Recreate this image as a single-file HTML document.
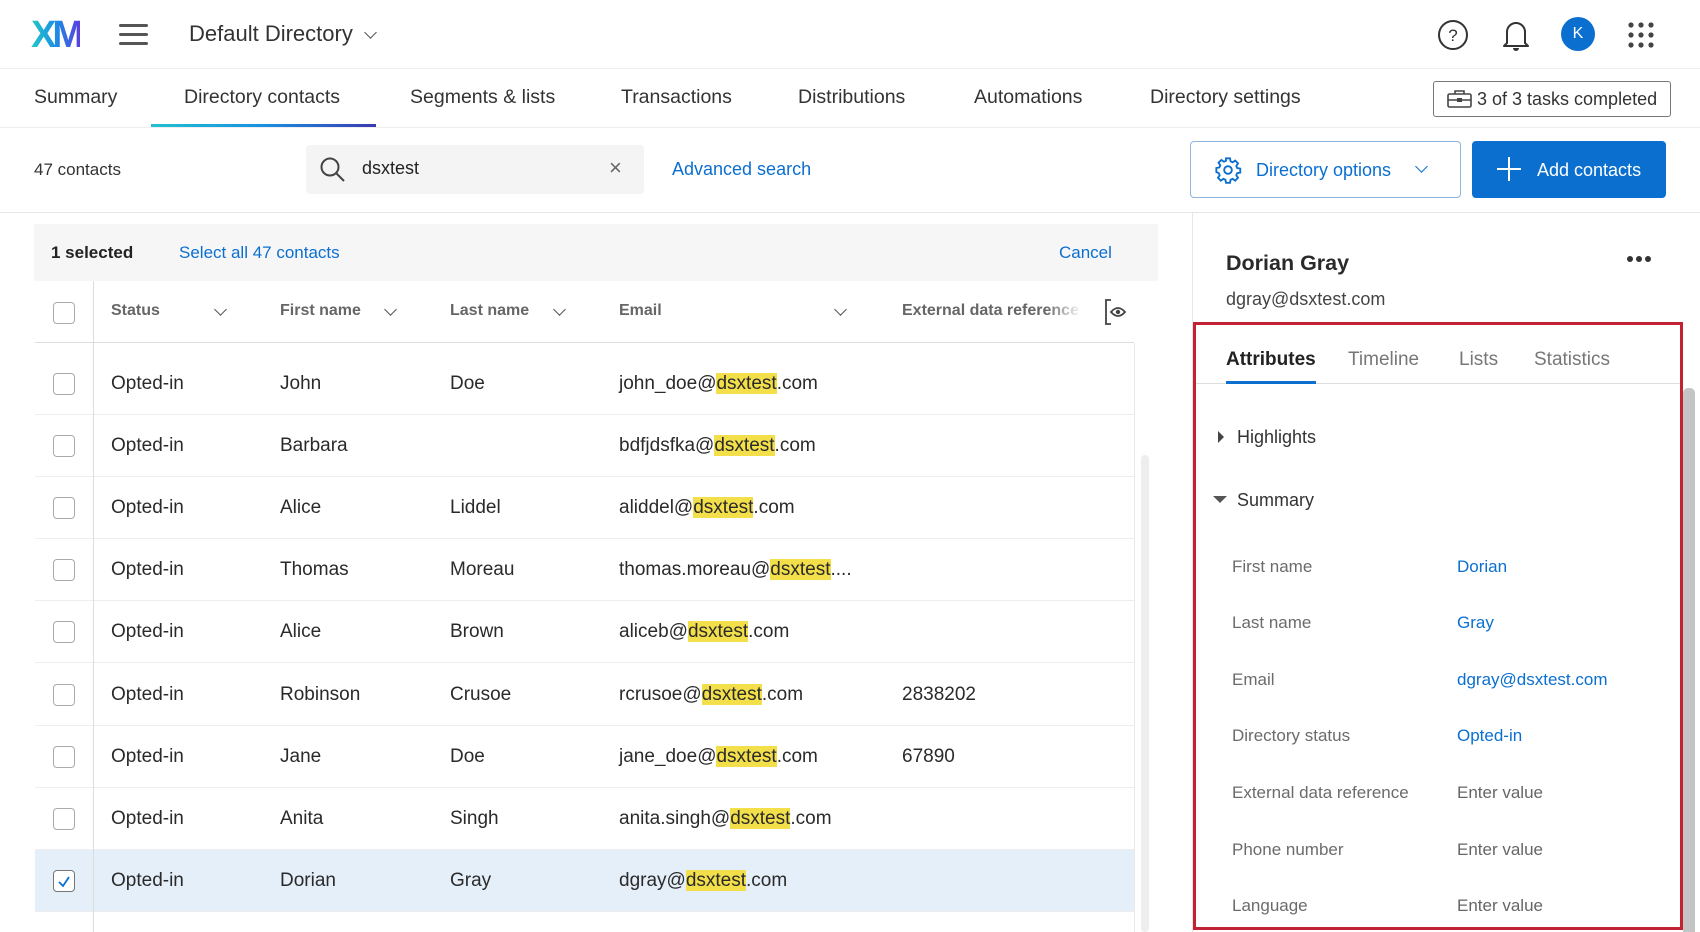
<!DOCTYPE html>
<html><head><meta charset="utf-8">
<style>
*{margin:0;padding:0;box-sizing:border-box}
body{width:1700px;height:932px;overflow:hidden;background:#fff;font-family:"Liberation Sans",sans-serif;color:#222;position:relative}
.a{position:absolute;white-space:nowrap}
.hl{background:#f3df4a}
.blue{color:#0b6fd0}
.cb{position:absolute;left:53px;width:22px;height:22px;border:1.5px solid #aaa;border-radius:4px;background:#fff}
.row{position:absolute;left:35px;width:1099px;height:62px;border-bottom:1px solid #eee;font-size:19px;color:#2a2a2a}
.row span{position:absolute;top:20px;white-space:nowrap}
.th{position:absolute;top:302px;font-size:16px;font-weight:bold;color:#666}
.chev{position:absolute;width:9px;height:9px;border-right:1.8px solid #555;border-bottom:1.8px solid #555;transform:rotate(45deg)}
.lbl{position:absolute;left:1232px;font-size:17px;color:#6b6b6b}
.val{position:absolute;left:1457px;font-size:17px}
</style></head><body>
<!-- header -->
<div class="a" style="left:31px;top:14px;font-size:38px;font-weight:bold;letter-spacing:-4px;font-family:'Liberation Sans Narrow','Liberation Sans',sans-serif;background:linear-gradient(90deg,#22c9c9,#1a8fe3 50%,#5a3ee0);-webkit-background-clip:text;background-clip:text;color:transparent">XM</div>
<div class="a" style="left:119px;top:24px;width:29px;height:3px;background:#555;border-radius:2px"></div>
<div class="a" style="left:119px;top:33px;width:29px;height:3px;background:#555;border-radius:2px"></div>
<div class="a" style="left:119px;top:42px;width:29px;height:3px;background:#555;border-radius:2px"></div>
<div class="a" style="left:189px;top:21px;font-size:22px;color:#333">Default Directory</div>
<div class="chev" style="left:366px;top:28px"></div>
<svg class="a" style="left:1436px;top:18px" width="34" height="34" viewBox="0 0 34 34"><circle cx="17" cy="17" r="14" fill="none" stroke="#333" stroke-width="2"/><text x="17" y="23" text-anchor="middle" font-size="17" font-family="Liberation Sans" fill="#333">?</text></svg>
<svg class="a" style="left:1500px;top:17px" width="32" height="36" viewBox="0 0 32 36"><path d="M7 26 V15 a9 9 0 0 1 18 0 V26 L28 29 H4 Z" fill="none" stroke="#333" stroke-width="2" stroke-linejoin="round"/><path d="M13 31 a3 3 0 0 0 6 0" fill="#333"/></svg>
<div class="a" style="left:1561px;top:17px;width:34px;height:34px;border-radius:50%;background:#0b6fd0;color:#fff;font-size:16px;text-align:center;line-height:34px">K</div>
<svg class="a" style="left:1627px;top:21px" width="28" height="28"><g fill="#444"><circle cx="4" cy="4" r="2.6"/><circle cx="14" cy="4" r="2.6"/><circle cx="24" cy="4" r="2.6"/><circle cx="4" cy="14" r="2.6"/><circle cx="14" cy="14" r="2.6"/><circle cx="24" cy="14" r="2.6"/><circle cx="4" cy="24" r="2.6"/><circle cx="14" cy="24" r="2.6"/><circle cx="24" cy="24" r="2.6"/></g></svg>
<div class="a" style="left:0;top:68px;width:1700px;height:1px;background:#eee"></div>
<!-- tabs -->
<div class="a" style="top:86px;left:34px;font-size:19.5px;color:#333">Summary</div>
<div class="a" style="top:86px;left:184px;font-size:19.5px;color:#333">Directory contacts</div>
<div class="a" style="top:86px;left:410px;font-size:19.5px;color:#333">Segments &amp; lists</div>
<div class="a" style="top:86px;left:621px;font-size:19.5px;color:#333">Transactions</div>
<div class="a" style="top:86px;left:798px;font-size:19.5px;color:#333">Distributions</div>
<div class="a" style="top:86px;left:974px;font-size:19.5px;color:#333">Automations</div>
<div class="a" style="top:86px;left:1150px;font-size:19.5px;color:#333">Directory settings</div>
<div class="a" style="left:151px;top:124px;width:225px;height:3px;background:linear-gradient(90deg,#22c1d0,#1a8fe3 50%,#3a3ab0)"></div>
<div class="a" style="left:1433px;top:81px;width:238px;height:36px;border:1.5px solid #777;border-radius:3px"></div>
<svg class="a" style="left:1447px;top:89px" width="26" height="20"><rect x="1" y="5" width="23" height="13" rx="1.5" fill="none" stroke="#444" stroke-width="1.6"/><path d="M8 5 V2 H17 V5 M1 11 H24" fill="none" stroke="#444" stroke-width="1.6"/><rect x="10" y="9" width="5" height="4" fill="#444"/></svg>
<div class="a" style="left:1477px;top:89px;font-size:18px;color:#333">3 of 3 tasks completed</div>
<div class="a" style="left:0;top:127px;width:1700px;height:1px;background:#eee"></div>
<!-- toolbar -->
<div class="a" style="left:34px;top:160px;font-size:17px;color:#333">47 contacts</div>
<div class="a" style="left:306px;top:145px;width:338px;height:49px;background:#f4f4f4;border-radius:4px"></div>
<svg class="a" style="left:318px;top:155px" width="30" height="30"><circle cx="12" cy="12" r="8.5" fill="none" stroke="#444" stroke-width="2"/><path d="M18 18 L26 26" stroke="#444" stroke-width="2"/></svg>
<div class="a" style="left:362px;top:158px;font-size:18px;color:#222">dsxtest</div>
<div class="a" style="left:609px;top:155px;font-size:22px;color:#666">×</div>
<div class="a blue" style="left:672px;top:159px;font-size:18px">Advanced search</div>
<div class="a" style="left:1190px;top:141px;width:271px;height:57px;border:1.5px solid #8fb4e0;border-radius:4px"></div>
<svg class="a" style="left:1214px;top:156px" width="28" height="28" viewBox="0 0 24 24"><path fill="none" stroke="#0b6fd0" stroke-width="1.6" d="M10.3 2h3.4l.5 2.6 1.8.8 2.2-1.5 2.4 2.4-1.5 2.2.8 1.8 2.6.5v3.4l-2.6.5-.8 1.8 1.5 2.2-2.4 2.4-2.2-1.5-1.8.8-.5 2.6h-3.4l-.5-2.6-1.8-.8-2.2 1.5-2.4-2.4 1.5-2.2-.8-1.8L2 13.7v-3.4l2.6-.5.8-1.8-1.5-2.2 2.4-2.4 2.2 1.5 1.8-.8z"/><circle cx="12" cy="12" r="3.3" fill="none" stroke="#0b6fd0" stroke-width="1.6"/></svg>
<div class="a blue" style="left:1256px;top:160px;font-size:18px">Directory options</div>
<div class="chev" style="left:1417px;top:162px;border-color:#0b6fd0"></div>
<div class="a" style="left:1472px;top:141px;width:194px;height:57px;background:#0b6fd0;border-radius:4px"></div>
<div class="a" style="left:1497px;top:168px;width:24px;height:2px;background:#fff"></div>
<div class="a" style="left:1508px;top:157px;width:2px;height:24px;background:#fff"></div>
<div class="a" style="left:1537px;top:160px;font-size:18px;color:#fff">Add contacts</div>
<div class="a" style="left:0;top:212px;width:1700px;height:1px;background:#e6e6e6"></div>
<!-- selection bar -->
<div class="a" style="left:34px;top:224px;width:1124px;height:57px;background:#f6f6f6"></div>
<div class="a" style="left:51px;top:243px;font-size:17px;font-weight:bold;color:#222">1 selected</div>
<div class="a blue" style="left:179px;top:243px;font-size:17px">Select all 47 contacts</div>
<div class="a blue" style="left:1059px;top:243px;font-size:17px">Cancel</div>
<!-- header row -->
<div class="cb" style="top:302px"></div>
<div class="a" style="left:93px;top:281px;width:1px;height:651px;background:#ddd"></div>
<div class="th" style="left:111px">Status</div><div class="chev" style="left:216px;top:305px"></div>
<div class="th" style="left:280px">First name</div><div class="chev" style="left:386px;top:305px"></div>
<div class="th" style="left:450px">Last name</div><div class="chev" style="left:555px;top:305px"></div>
<div class="th" style="left:619px">Email</div><div class="chev" style="left:836px;top:305px"></div>
<div class="th" style="left:902px;width:180px;overflow:hidden;-webkit-mask-image:linear-gradient(90deg,#000 80%,transparent)">External data reference</div>
<svg class="a" style="left:1103px;top:298px" width="26" height="28"><path d="M8 2 H3 V26 H8" fill="none" stroke="#444" stroke-width="1.8"/><path d="M8 14 Q15 6 22 14 Q15 22 8 14Z" fill="none" stroke="#444" stroke-width="1.8"/><circle cx="15" cy="14" r="2.2" fill="#444"/></svg>
<div class="a" style="left:35px;top:342px;width:1099px;height:1px;background:#ddd"></div>
<div class="a" style="left:1134px;top:343px;width:1px;height:589px;background:#e8e8e8"></div>
<div class="a" style="left:1141px;top:455px;width:8px;height:477px;background:#eee;border-radius:4px"></div>
<!-- rows -->
<div class="row" style="top:353px"><span style="left:76px">Opted-in</span><span style="left:245px">John</span><span style="left:415px">Doe</span><span style="left:584px">john_doe@<b class="hl" style="font-weight:normal">dsxtest</b>.com</span></div>
<div class="row" style="top:415px"><span style="left:76px">Opted-in</span><span style="left:245px">Barbara</span><span style="left:584px">bdfjdsfka@<b class="hl" style="font-weight:normal">dsxtest</b>.com</span></div>
<div class="row" style="top:477px"><span style="left:76px">Opted-in</span><span style="left:245px">Alice</span><span style="left:415px">Liddel</span><span style="left:584px">aliddel@<b class="hl" style="font-weight:normal">dsxtest</b>.com</span></div>
<div class="row" style="top:539px"><span style="left:76px">Opted-in</span><span style="left:245px">Thomas</span><span style="left:415px">Moreau</span><span style="left:584px">thomas.moreau@<b class="hl" style="font-weight:normal">dsxtest</b>....</span></div>
<div class="row" style="top:601px"><span style="left:76px">Opted-in</span><span style="left:245px">Alice</span><span style="left:415px">Brown</span><span style="left:584px">aliceb@<b class="hl" style="font-weight:normal">dsxtest</b>.com</span></div>
<div class="row" style="top:664px"><span style="left:76px">Opted-in</span><span style="left:245px">Robinson</span><span style="left:415px">Crusoe</span><span style="left:584px">rcrusoe@<b class="hl" style="font-weight:normal">dsxtest</b>.com</span><span style="left:867px">2838202</span></div>
<div class="row" style="top:726px"><span style="left:76px">Opted-in</span><span style="left:245px">Jane</span><span style="left:415px">Doe</span><span style="left:584px">jane_doe@<b class="hl" style="font-weight:normal">dsxtest</b>.com</span><span style="left:867px">67890</span></div>
<div class="row" style="top:788px"><span style="left:76px">Opted-in</span><span style="left:245px">Anita</span><span style="left:415px">Singh</span><span style="left:584px">anita.singh@<b class="hl" style="font-weight:normal">dsxtest</b>.com</span></div>
<div class="row" style="top:850px;background:#e5eff9"><span style="left:76px">Opted-in</span><span style="left:245px">Dorian</span><span style="left:415px">Gray</span><span style="left:584px">dgray@<b class="hl" style="font-weight:normal">dsxtest</b>.com</span></div>
<div class="cb" style="top:373px"></div><div class="cb" style="top:435px"></div><div class="cb" style="top:497px"></div><div class="cb" style="top:559px"></div><div class="cb" style="top:621px"></div><div class="cb" style="top:684px"></div><div class="cb" style="top:746px"></div><div class="cb" style="top:808px"></div>
<div class="cb" style="top:870px;border-color:#777"></div>
<svg class="a" style="left:56px;top:874px" width="16" height="16"><path d="M3 8 L7 12 L13 3" fill="none" stroke="#0b6fd0" stroke-width="1.8"/></svg>
<div class="a" style="left:93px;top:281px;width:1px;height:651px;background:#ddd"></div>
<!-- right panel -->
<div class="a" style="left:1192px;top:212px;width:1px;height:720px;background:#e6e6e6"></div>
<div class="a" style="left:1226px;top:251px;font-size:21.5px;font-weight:bold;color:#2a2a2a">Dorian Gray</div>
<svg class="a" style="left:1626px;top:255px" width="26" height="8"><circle cx="4" cy="4" r="3" fill="#333"/><circle cx="13" cy="4" r="3" fill="#333"/><circle cx="22" cy="4" r="3" fill="#333"/></svg>
<div class="a" style="left:1226px;top:289px;font-size:18px;color:#444">dgray@dsxtest.com</div>
<div class="a" style="left:1683px;top:388px;width:12px;height:544px;background:#c4c4c4;border-radius:5px 5px 0 0"></div>
<div class="a" style="left:1196px;top:383px;width:484px;height:1px;background:#ddd"></div>
<div class="a" style="left:1226px;top:349px;font-size:19px;font-weight:bold;color:#222">Attributes</div>
<div class="a" style="left:1348px;top:349px;font-size:19px;color:#777">Timeline</div>
<div class="a" style="left:1459px;top:349px;font-size:19px;color:#777">Lists</div>
<div class="a" style="left:1534px;top:349px;font-size:19px;color:#777">Statistics</div>
<div class="a" style="left:1226px;top:381px;width:90px;height:3px;background:#0b6fd0"></div>
<svg class="a" style="left:1216px;top:429px" width="10" height="16"><path d="M2 2 L8 8 L2 14Z" fill="#444"/></svg>
<div class="a" style="left:1237px;top:427px;font-size:18px;color:#333">Highlights</div>
<svg class="a" style="left:1212px;top:495px" width="16" height="10"><path d="M1 1 L15 1 L8 8Z" fill="#555"/></svg>
<div class="a" style="left:1237px;top:490px;font-size:18px;color:#333">Summary</div>
<div class="lbl" style="top:557px">First name</div><div class="val blue" style="top:557px">Dorian</div>
<div class="lbl" style="top:613px">Last name</div><div class="val blue" style="top:613px">Gray</div>
<div class="lbl" style="top:670px">Email</div><div class="val blue" style="top:670px">dgray@dsxtest.com</div>
<div class="lbl" style="top:726px">Directory status</div><div class="val blue" style="top:726px">Opted-in</div>
<div class="lbl" style="top:783px">External data reference</div><div class="val" style="top:783px;color:#666">Enter value</div>
<div class="lbl" style="top:840px">Phone number</div><div class="val" style="top:840px;color:#666">Enter value</div>
<div class="lbl" style="top:896px">Language</div><div class="val" style="top:896px;color:#666">Enter value</div>
<div class="a" style="left:1193px;top:322px;width:490px;height:608px;border:3.5px solid #c32232"></div>
</body></html>
